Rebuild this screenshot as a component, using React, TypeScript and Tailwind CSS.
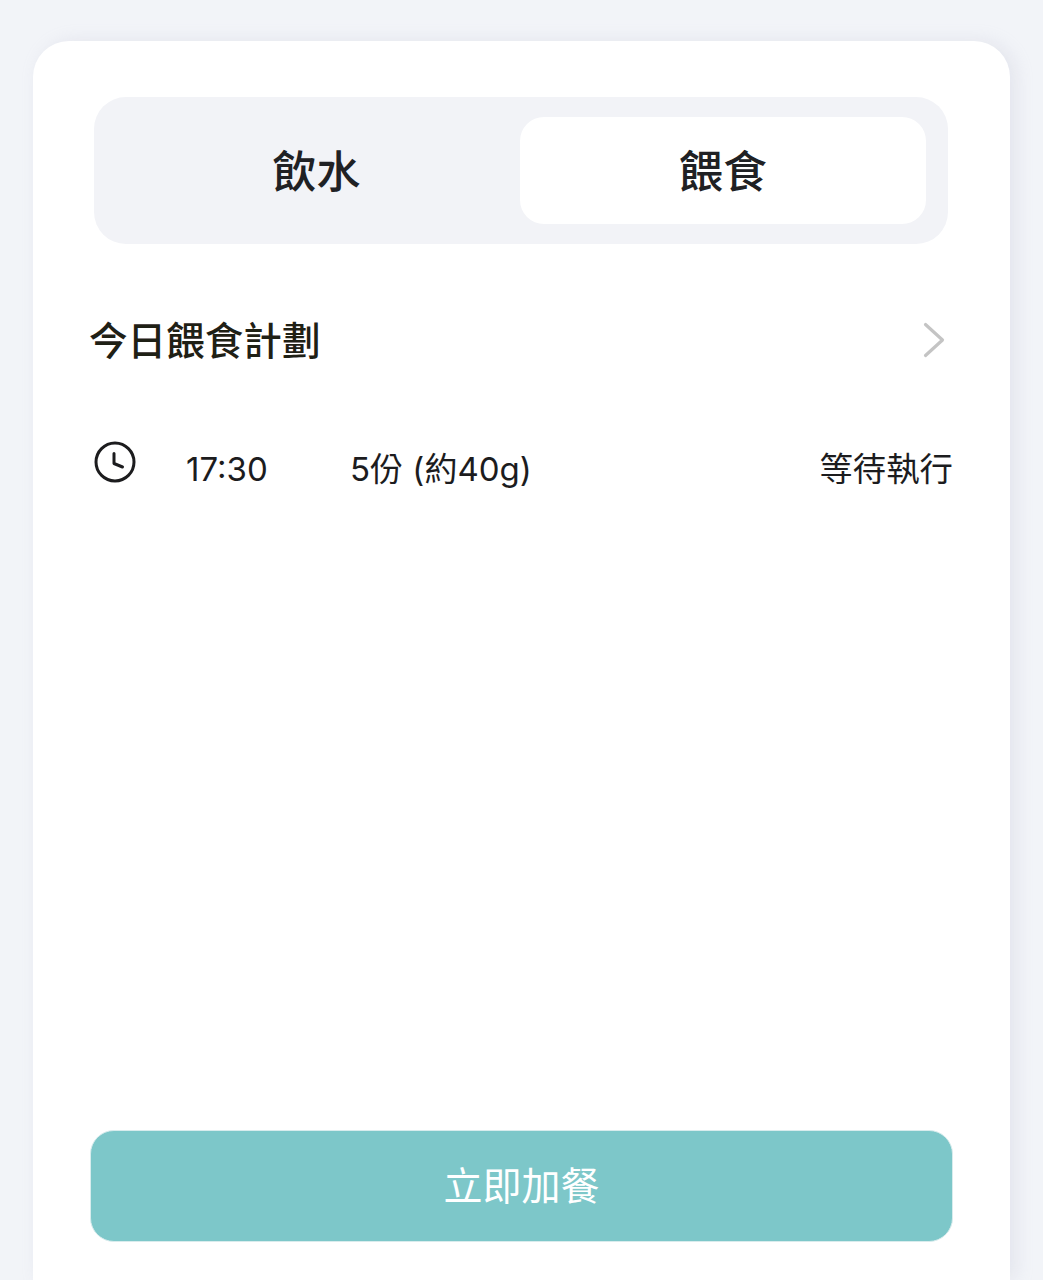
export default function App() {
  const cjk = "font-['Inter','Noto_Sans_CJK_TC',sans-serif]";
  return (
    <div className={`h-[1280px] w-full overflow-hidden bg-[#f2f4f8] px-[33px] pt-[41px] ${cjk}`}>
      <div className="flex h-[1239px] flex-col rounded-t-[36px] bg-white px-[57px] pt-[56px] shadow-[6px_0_18px_rgba(170,170,195,0.2)]">
        <div className="ml-[4px] mr-[5px] flex h-[147px] rounded-[32px] bg-[#f2f3f7] px-[22px] py-[20px]">
          <div className="flex flex-1 items-center justify-center pr-[3px] pt-[3px] text-[44px] font-medium text-[#202124]">飲水</div>
          <div className="flex w-[406px] shrink-0 items-center justify-center rounded-[24px] bg-white pt-[3px] text-[44px] font-medium text-[#202124]">餵食</div>
        </div>

        <div className="mt-[73px] flex h-[48px] items-center justify-between">
          <span className="-ml-[1px] text-[38.6px] font-medium leading-none text-[#1f2015]">今日餵食計劃</span>
          <svg width="22" height="36" viewBox="0 0 22 36" fill="none" className="mb-[2px] mr-[8px]" stroke="#c4c4c4" strokeWidth="3.2" strokeLinecap="round" strokeLinejoin="round">
            <path d="M2.5 2.5 L19.5 18 L2.5 33.5" />
          </svg>
        </div>

        <div className="mt-[73px] flex h-[60px] items-start text-[33px] text-[#1c1c1e]">
          <svg width="42" height="42" viewBox="0 0 42 42" fill="none" stroke="#1c1c1e" strokeWidth="3" strokeLinecap="round" strokeLinejoin="round" className="ml-[4px] mt-[3px] shrink-0">
            <circle cx="21" cy="21" r="19" />
            <path d="M20 12.5 V22.5 L28.5 26" />
          </svg>
          <span className="ml-[50px] mt-[11px] w-[164px] leading-[40px]">17:30</span>
          <span className="mt-[11px] leading-[40px]">5份 (約40g)</span>
          <span className="ml-auto mt-[11px] text-[33.4px] leading-[40px]">等待執行</span>
        </div>

        <div className="mb-[38px] mt-auto flex h-[112px] items-center justify-center rounded-[24px] border border-[#d8eced] bg-[#7dc7c9] text-[39px] text-white">
          立即加餐
        </div>
      </div>
    </div>
  );
}
